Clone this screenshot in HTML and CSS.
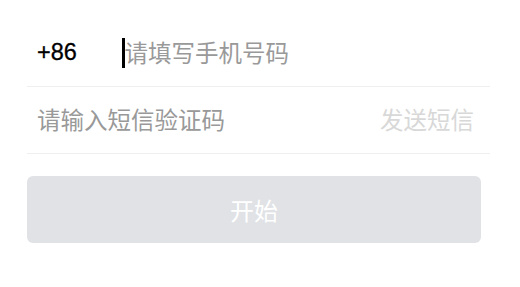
FILE: index.html
```html
<!DOCTYPE html>
<html lang="zh-CN">
<head>
<meta charset="utf-8">
<title>登录</title>
<link rel="stylesheet" href="styles.css">
</head>
<body>
<div class="form">
  <div class="row">
    <span class="code">+86</span>
    <span class="caret"></span>
    <span class="placeholder">请填写手机号码</span>
  </div>
  <div class="row">
    <span class="placeholder grow">请输入短信验证码</span>
    <span class="send">发送短信</span>
  </div>
  <button class="start" type="button">开始</button>
</div>
</body>
</html>
```
FILE: styles.css
```css
html, body {
  margin: 0;
  padding: 0;
  background: #ffffff;
}
body {
  font-family: "Liberation Sans", "Noto Sans CJK SC", sans-serif;
}
.form {
  padding: 20px 30px 0 27px;
  display: flex;
  flex-direction: column;
}
.row {
  height: 66px;
  border-bottom: 1px solid #efefef;
  display: flex;
  align-items: center;
  padding: 0 16px 0 10px;
  font-size: 23.5px;
}
.code {
  width: 85px;
  color: #000;
  font-size: 23.5px;
  line-height: 1;
  -webkit-text-stroke: 0.3px #000;
}
.caret {
  width: 2.5px;
  height: 30px;
  background: #000;
}
.placeholder {
  color: #999999;
  font-family: "Noto Sans CJK SC", sans-serif;
  line-height: 1;
}
.grow {
  flex: 1;
}
.send {
  color: #d8d8d8;
  font-family: "Noto Sans CJK SC", sans-serif;
  line-height: 1;
}
.start {
  margin-top: 22px;
  width: 454px;
  height: 67px;
  border: none;
  border-radius: 6px;
  background: #e0e2e6;
  color: #ffffff;
  font-family: "Noto Sans CJK SC", sans-serif;
  font-size: 24px;
  padding: 0;
}
```
